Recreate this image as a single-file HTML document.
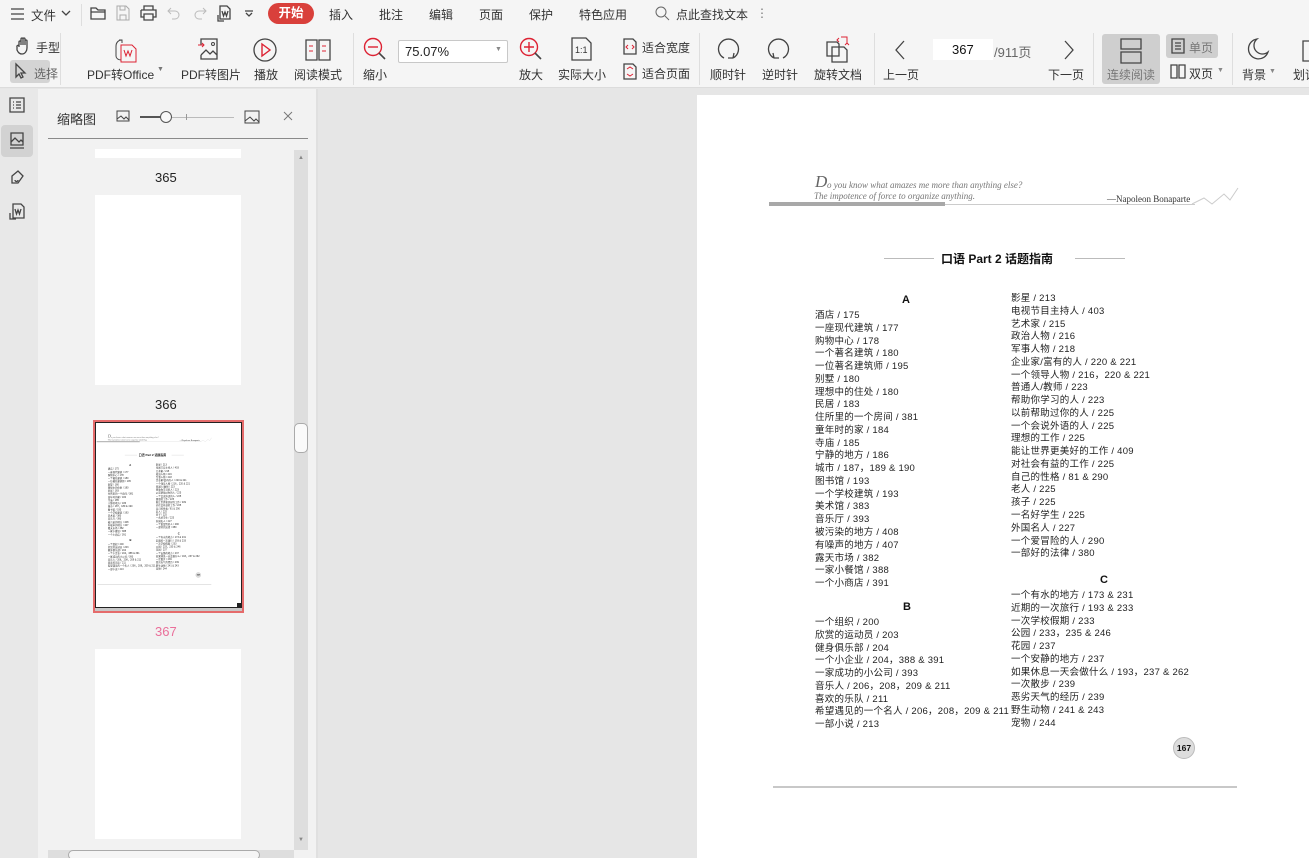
<!DOCTYPE html>
<html><head><meta charset="utf-8">
<style>
*{margin:0;padding:0;box-sizing:border-box}
html,body{width:1309px;height:858px;overflow:hidden}
body{background:#e6e6e6;font-family:"Liberation Sans","Noto Sans CJK SC",sans-serif;color:#333;position:relative;font-size:12px}
.a{position:absolute;white-space:nowrap}
.tb{position:absolute;left:0;top:0;width:1309px;height:88px;background:#f5f5f5;border-bottom:1px solid #dcdcdc}
.sep{position:absolute;width:1px;background:#dedede}
.lbl{font-size:12px;color:#333}
svg{position:absolute;overflow:visible}
.ic{stroke:#444;fill:none;stroke-width:1.3}
.pg{position:absolute;left:697px;top:95px;width:612px;height:763px;background:#fff;overflow:hidden}
.pg .t{position:absolute;white-space:nowrap;font-family:"Liberation Sans","Noto Sans CJK SC",sans-serif;font-size:9.5px;line-height:12.77px;color:#222;letter-spacing:0.25px}
.pg .h{position:absolute;font-weight:bold;font-size:11px;font-family:"Liberation Sans",sans-serif;color:#111}
</style></head><body>
<div class="tb"></div>
<svg style="left:10px;top:7px" width="16" height="14"><path class="ic" d="M1 2h13M1 7h13M1 12h13"/></svg>
<div class="a lbl" style="left:31px;top:5px;font-size:12.5px">文件</div>
<svg style="left:61px;top:10px" width="10" height="6"><path class="ic" d="M1 1l4 4 4-4"/></svg>
<div class="sep" style="left:81px;top:4px;height:22px"></div>
<svg style="left:90px;top:6px" width="17" height="15"><path class="ic" d="M1 2h5l2 2h7v9H1zM1 6h14"/></svg>
<svg style="left:116px;top:5px" width="14" height="16"><path d="M1 1h9l3 3v11H1z" stroke="#aaa" fill="none"/><path d="M4 1v4h5V1M4 15v-5h6v5" stroke="#aaa" fill="none"/></svg>
<svg style="left:140px;top:5px" width="17" height="16"><path class="ic" d="M4 5V1h9v4M1 5h15v7h-3M4 12H1V5M4 9h9v6H4z"/></svg>
<svg style="left:167px;top:6px" width="14" height="14"><path d="M4 2L1 5l3 3M1 5h7a4 4 0 010 8H5" stroke="#bbb" fill="none"/></svg>
<svg style="left:193px;top:6px" width="14" height="14"><path d="M10 2l3 3-3 3M13 5H6a4 4 0 000 8h3" stroke="#bbb" fill="none"/></svg>
<svg style="left:215px;top:5px" width="18" height="18"><path class="ic" d="M5 1h7l3 3v10H5zM3 10v6h6M7 6l1.5 5 1.5-4 1.5 4 1.5-5"/></svg>
<svg style="left:244px;top:10px" width="10" height="6"><path class="ic" d="M1 1h8M2 3l3 3 3-3"/></svg>
<div class="a" style="left:268px;top:3px;width:46px;height:21px;border-radius:11px;background:#d9403b;color:#fff;font-weight:bold;text-align:center;line-height:21px;font-size:12.5px">开始</div>
<div class="a lbl" style="left:329px;top:6px">插入</div>
<div class="a lbl" style="left:379px;top:6px">批注</div>
<div class="a lbl" style="left:429px;top:6px">编辑</div>
<div class="a lbl" style="left:479px;top:6px">页面</div>
<div class="a lbl" style="left:529px;top:6px">保护</div>
<div class="a lbl" style="left:579px;top:6px">特色应用</div>
<svg style="left:655px;top:6px" width="15" height="15"><circle cx="6" cy="6" r="5" stroke="#666" fill="none"/><path d="M10 10l4 4" stroke="#666"/></svg>
<div class="a lbl" style="left:676px;top:6px">点此查找文本</div>
<div class="a" style="left:756px;top:6px;color:#777;font-size:12px">⋮</div>

<svg style="left:15px;top:37px" width="18" height="18"><path class="ic" d="M4 10V5a1 1 0 012 0v3V2a1 1 0 012 0v6V2a1 1 0 012 0v6V4a1 1 0 012 0v7c0 3-2 6-5 6s-4-2-5-4L2 10a1 1 0 012-1"/></svg>
<div class="a lbl" style="left:36px;top:39px">手型</div>
<div class="a" style="left:10px;top:60px;width:40px;height:23px;background:#d4d4d4;border-radius:3px"></div>
<svg style="left:15px;top:63px" width="12" height="16"><path class="ic" d="M1 1v13l3-3 2 4 2-1-2-4h4z"/></svg>
<div class="a lbl" style="left:34px;top:65px;color:#666">选择</div>
<div class="sep" style="left:60px;top:33px;height:52px"></div>
<svg style="left:113px;top:37px" width="26" height="26"><path d="M6 3h3v3M9 3c-4 0-6 3-6 6v10c0 2 2 4 5 4" stroke="#444" fill="none"/><path d="M8 8h11l4 4v13H8z" stroke="#d23" fill="none"/><path d="M11 13l2 6 2-5 2 5 2-6" stroke="#d23" fill="none"/></svg>
<div class="a lbl" style="left:87px;top:66px">PDF转Office</div>
<div class="a" style="left:157px;top:66px;font-size:7px;color:#777">▼</div>
<svg style="left:197px;top:37px" width="24" height="24"><path class="ic" d="M4 8V2h16v20H4v-4M4 18l5-5 4 4 3-3 4 4"/><circle cx="16" cy="7" r="1.5" stroke="#444" fill="none"/><path d="M1 8h6M5 6l2 2-2 2" stroke="#d23" fill="none"/></svg>
<div class="a lbl" style="left:181px;top:66px">PDF转图片</div>
<svg style="left:252px;top:37px" width="26" height="26"><circle cx="13" cy="13" r="11" class="ic"/><path d="M10 7l8 6-8 6z" stroke="#d23" fill="none" stroke-width="1.4"/></svg>
<div class="a lbl" style="left:254px;top:66px">播放</div>
<svg style="left:305px;top:38px" width="26" height="24"><path class="ic" d="M1 2h11v20H1zM14 2h11v20H14zM12 2v20"/><path d="M4 8h4M4 13h4M17 8h4M17 13h4" stroke="#d23"/></svg>
<div class="a lbl" style="left:294px;top:66px">阅读模式</div>
<div class="sep" style="left:353px;top:33px;height:52px"></div>
<svg style="left:363px;top:37px" width="24" height="24"><circle cx="10" cy="10" r="8.5" stroke="#d23" fill="none" stroke-width="1.4"/><path d="M5 10h10" stroke="#d23" stroke-width="1.4"/><path d="M16 16l6 6" stroke="#444" stroke-width="1.6"/></svg>
<div class="a lbl" style="left:363px;top:66px">缩小</div>
<div class="a" style="left:398px;top:40px;width:110px;height:23px;border:1px solid #c8c8c8;background:#fff;border-radius:2px"></div>
<div class="a" style="left:405px;top:44px;font-size:13px;color:#222">75.07%</div>
<div class="a" style="left:495px;top:46px;font-size:7px;color:#888">▼</div>
<svg style="left:519px;top:37px" width="24" height="24"><circle cx="10" cy="10" r="8.5" stroke="#d23" fill="none" stroke-width="1.4"/><path d="M5 10h10M10 5v10" stroke="#d23" stroke-width="1.4"/><path d="M16 16l6 6" stroke="#444" stroke-width="1.6"/></svg>
<div class="a lbl" style="left:519px;top:66px">放大</div>
<svg style="left:571px;top:37px" width="22" height="24"><path class="ic" d="M1 1h14l5 5v17H1z"/><text x="4" y="16" font-size="9" fill="#333" font-family="Liberation Sans">1:1</text></svg>
<div class="a lbl" style="left:558px;top:66px">实际大小</div>
<svg style="left:623px;top:38px" width="14" height="17"><path class="ic" d="M1 1h9l3 3v12H1z"/><path d="M5 7l-2 2 2 2M9 7l2 2-2 2" stroke="#d23" fill="none"/></svg>
<div class="a lbl" style="left:642px;top:39px">适合宽度</div>
<svg style="left:623px;top:63px" width="14" height="17"><path class="ic" d="M1 1h9l3 3v12H1z"/><path d="M4 6l3-2 3 2M4 11l3 2 3-2" stroke="#d23" fill="none"/></svg>
<div class="a lbl" style="left:642px;top:65px">适合页面</div>
<div class="sep" style="left:699px;top:33px;height:52px"></div>
<svg style="left:716px;top:37px" width="24" height="24"><path class="ic" d="M8 21A10 10 0 1117 21M17 21l1-5M17 21l-5 0" stroke-width="1.5"/></svg>
<div class="a lbl" style="left:710px;top:66px">顺时针</div>
<svg style="left:767px;top:37px" width="24" height="24"><path class="ic" d="M16 21A10 10 0 107 21M7 21l-1-5M7 21l5 0" stroke-width="1.5"/></svg>
<div class="a lbl" style="left:762px;top:66px">逆时针</div>
<svg style="left:825px;top:36px" width="26" height="28"><path class="ic" d="M2 6h10l2 2v12H2z"/><path class="ic" d="M7 11h12l3 3v12H7z"/><path d="M16 1h6v6M20 9l2-2 2 2M14 2l-2 2 2 2" stroke="#d23" fill="none"/></svg>
<div class="a lbl" style="left:814px;top:66px">旋转文档</div>
<div class="sep" style="left:874px;top:33px;height:52px"></div>
<svg style="left:894px;top:40px" width="12" height="20"><path d="M10 1L2 10l8 9" stroke="#444" fill="none" stroke-width="1.3"/></svg>
<div class="a lbl" style="left:883px;top:66px">上一页</div>
<div class="a" style="left:933px;top:39px;width:60px;height:21px;background:#fff"></div>
<div class="a" style="left:952px;top:42px;font-size:13px;color:#111">367</div>
<div class="a" style="left:994px;top:42px;font-size:13px;color:#666">/911页</div>
<svg style="left:1063px;top:40px" width="12" height="20"><path d="M2 1l8 9-8 9" stroke="#444" fill="none" stroke-width="1.3"/></svg>
<div class="a lbl" style="left:1048px;top:66px">下一页</div>
<div class="sep" style="left:1093px;top:33px;height:52px"></div>
<div class="a" style="left:1102px;top:34px;width:58px;height:50px;background:#cfcfcf;border-radius:3px"></div>
<svg style="left:1119px;top:38px" width="24" height="26"><path class="ic" d="M2 1h20v10H2zM2 14h20v11H2z"/></svg>
<div class="a lbl" style="left:1107px;top:66px;color:#777">连续阅读</div>
<div class="a" style="left:1166px;top:34px;width:52px;height:24px;background:#cfcfcf;border-radius:3px"></div>
<svg style="left:1171px;top:38px" width="14" height="16"><path class="ic" d="M1 1h12v14H1zM4 5h6M4 8h6M4 11h6"/></svg>
<div class="a lbl" style="left:1189px;top:39px;color:#777">单页</div>
<svg style="left:1170px;top:64px" width="16" height="15"><path class="ic" d="M1 1h6v13H1zM9 1h6v13H9z"/></svg>
<div class="a lbl" style="left:1189px;top:65px">双页</div>
<div class="a" style="left:1217px;top:67px;font-size:7px;color:#888">▼</div>
<div class="sep" style="left:1232px;top:33px;height:52px"></div>
<svg style="left:1248px;top:38px" width="22" height="22"><path class="ic" d="M9 1A10 10 0 1020 14 8 8 0 019 1z"/></svg>
<div class="a lbl" style="left:1242px;top:66px">背景</div>
<div class="a" style="left:1269px;top:68px;font-size:7px;color:#888">▼</div>
<svg style="left:1302px;top:40px" width="10" height="22"><path class="ic" d="M1 1h10v20H1z"/></svg>
<div class="a lbl" style="left:1293px;top:66px">划词</div>

<div class="a" style="left:0;top:89px;width:38px;height:769px;background:#e8e8e8"></div>
<svg style="left:9px;top:97px" width="16" height="16"><path class="ic" d="M1 1h14v14H1zM4 5h1M7 5h5M4 8h1M7 8h5M4 11h1M7 11h5"/></svg>
<div class="a" style="left:1px;top:125px;width:32px;height:32px;background:#d2d2d2;border-radius:4px"></div>
<svg style="left:9px;top:132px" width="16" height="18"><path class="ic" d="M2 1h12v12H2zM2 10l4-4 4 4 2-2 2 2M1 16h14"/></svg>
<svg style="left:9px;top:169px" width="16" height="17"><path class="ic" d="M3 7l6-5 5 5-5 7H3zM6 11a1.5 1.5 0 103 0"/></svg>
<svg style="left:9px;top:203px" width="17" height="18"><path class="ic" d="M4 1h8l3 3v11H4zM1 10v6h6M6 6l1.5 5 1.5-4 1.5 4 1.5-5"/></svg>

<div class="a" style="left:38px;top:89px;width:280px;height:769px;background:#f2f2f2"></div>
<div class="a" style="left:57px;top:109px;font-size:13px;color:#333">缩略图</div>
<svg style="left:116px;top:110px" width="14" height="12"><path d="M1 1h12v10H1zM1 9l4-3 3 3 2-2 3 3" stroke="#444" fill="none"/></svg>
<div class="a" style="left:140px;top:117px;width:94px;height:1px;background:#bbb"></div>
<div class="a" style="left:140px;top:116px;width:22px;height:2px;background:#555"></div>
<div class="a" style="left:160px;top:111px;width:12px;height:12px;border-radius:50%;border:1px solid #555;background:#f8f8f8"></div>
<div class="a" style="left:186px;top:114px;width:1px;height:6px;background:#999"></div>
<svg style="left:244px;top:110px" width="16" height="14"><path d="M1 1h14v12H1zM1 11l5-4 4 4 2-2 3 3" stroke="#444" fill="none"/></svg>
<svg style="left:283px;top:111px" width="10" height="10"><path d="M1 1l8 8M9 1l-8 8" stroke="#777"/></svg>
<div class="a" style="left:48px;top:138px;width:260px;height:1px;background:#8a8a8a"></div>
<div class="a" style="left:95px;top:149px;width:146px;height:9px;background:#fff"></div>
<div class="a" style="left:155px;top:170px;font-size:13px;color:#222">365</div>
<div class="a" style="left:95px;top:195px;width:146px;height:190px;background:#fff"></div>
<div class="a" style="left:155px;top:397px;font-size:13px;color:#222">366</div>
<div class="a" style="left:93px;top:420px;width:151px;height:193px;border:2px solid #e56b6b;background:#c8c8c8"></div>
<div class="a" style="left:95px;top:422px;width:147px;height:186px;border:1px solid #222;background:#fff;overflow:hidden" id="thumb"></div>
<div class="a" style="left:237px;top:603px;width:5px;height:5px;background:#222"></div>
<div class="a" style="left:155px;top:624px;font-size:13px;color:#ea6f9a">367</div>
<div class="a" style="left:95px;top:649px;width:146px;height:190px;background:#fff"></div>
<div class="a" style="left:294px;top:150px;width:14px;height:700px;background:#dedede"></div>
<div class="a" style="left:298px;top:155px;font-size:6px;color:#888">▲</div>
<div class="a" style="left:298px;top:837px;font-size:6px;color:#888">▼</div>
<div class="a" style="left:294px;top:423px;width:14px;height:30px;background:#fafafa;border:1px solid #aaa;border-radius:5px"></div>
<div class="a" style="left:48px;top:850px;width:246px;height:8px;background:#dedede"></div>
<div class="a" style="left:68px;top:850px;width:192px;height:10px;background:#f5f5f5;border:1px solid #aaa;border-radius:5px"></div>
<div class="a" style="left:316px;top:89px;width:2px;height:769px;background:#e0e0e0"></div>

<div class="pg" id="pg">
  <div class="a" style="left:118px;top:77px;font-family:'Liberation Serif',serif;font-style:italic;font-size:17px;color:#666">D</div>
  <div class="a" style="left:130px;top:85px;font-family:'Liberation Serif',serif;font-style:italic;font-size:9px;color:#777">o you know what amazes me more than anything else?</div>
  <div class="a" style="left:117px;top:96px;font-family:'Liberation Serif',serif;font-style:italic;font-size:9px;color:#777">The impotence of force to organize anything.</div>
  <div class="a" style="left:410px;top:99px;font-family:'Liberation Serif',serif;font-size:9px;color:#333">—Napoleon Bonaparte</div>
  <div class="a" style="left:72px;top:107px;width:176px;height:4px;background:#a8a8a8"></div>
  <div class="a" style="left:248px;top:109px;width:250px;height:1px;background:#ccc"></div>
  <svg style="left:495px;top:92px" width="50" height="20"><path d="M0 17l12-6 8 6 12-10 6 6 8-12" stroke="#ccc" fill="none"/></svg>
  <div class="a" style="left:187px;top:163px;width:50px;height:1px;background:#bbb"></div>
  <div class="a" style="left:378px;top:163px;width:50px;height:1px;background:#bbb"></div>
  <div class="a" style="left:244px;top:155px;font-size:12px;font-weight:bold;color:#111">口语 Part 2 话题指南</div>
  <div class="h" style="left:205px;top:199px">A</div>
  <div class="t" style="left:118px;top:215px">酒店 / 175<br>一座现代建筑 / 177<br>购物中心 / 178<br>一个著名建筑 / 180<br>一位著名建筑师 / 195<br>别墅 / 180<br>理想中的住处 / 180<br>民居 / 183<br>住所里的一个房间 / 381<br>童年时的家 / 184<br>寺庙 / 185<br>宁静的地方 / 186<br>城市 / 187，189 &amp; 190<br>图书馆 / 193<br>一个学校建筑 / 193<br>美术馆 / 383<br>音乐厅 / 393<br>被污染的地方 / 408<br>有噪声的地方 / 407<br>露天市场 / 382<br>一家小餐馆 / 388<br>一个小商店 / 391</div>
  <div class="h" style="left:206px;top:506px">B</div>
  <div class="t" style="left:118px;top:522px">一个组织 / 200<br>欣赏的运动员 / 203<br>健身俱乐部 / 204<br>一个小企业 / 204，388 &amp; 391<br>一家成功的小公司 / 393<br>音乐人 / 206，208，209 &amp; 211<br>喜欢的乐队 / 211<br>希望遇见的一个名人 / 206，208，209 &amp; 211<br>一部小说 / 213</div>
  <div class="t" style="left:314px;top:198px">影星 / 213<br>电视节目主持人 / 403<br>艺术家 / 215<br>政治人物 / 216<br>军事人物 / 218<br>企业家/富有的人 / 220 &amp; 221<br>一个领导人物 / 216，220 &amp; 221<br>普通人/教师 / 223<br>帮助你学习的人 / 223<br>以前帮助过你的人 / 225<br>一个会说外语的人 / 225<br>理想的工作 / 225<br>能让世界更美好的工作 / 409<br>对社会有益的工作 / 225<br>自己的性格 / 81 &amp; 290<br>老人 / 225<br>孩子 / 225<br>一名好学生 / 225<br>外国名人 / 227<br>一个爱冒险的人 / 290<br>一部好的法律 / 380</div>
  <div class="h" style="left:403px;top:479px">C</div>
  <div class="t" style="left:314px;top:495px">一个有水的地方 / 173 &amp; 231<br>近期的一次旅行 / 193 &amp; 233<br>一次学校假期 / 233<br>公园 / 233，235 &amp; 246<br>花园 / 237<br>一个安静的地方 / 237<br>如果休息一天会做什么 / 193，237 &amp; 262<br>一次散步 / 239<br>恶劣天气的经历 / 239<br>野生动物 / 241 &amp; 243<br>宠物 / 244</div>
  <div class="a" style="left:476px;top:642px;width:22px;height:22px;border-radius:50%;background:#ddd;border:1px solid #bbb;font-size:8.5px;font-weight:bold;text-align:center;line-height:20px;color:#111">167</div>
  <div class="a" style="left:76px;top:691px;width:464px;height:2px;background:#c8c8c8"></div>
</div>
<script>
var c=document.getElementById('pg').cloneNode(true);c.removeAttribute('id');
c.style.cssText='left:-17px;top:-8px;height:780px;transform:scale(0.245);transform-origin:0 0;';
document.getElementById('thumb').appendChild(c);
</script>
</body></html>
